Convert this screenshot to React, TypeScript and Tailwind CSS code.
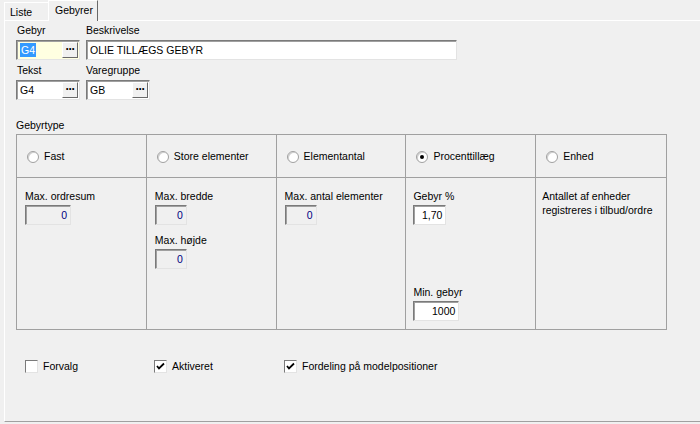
import React from 'react';

const font = { fontFamily: 'Tahoma, "Liberation Sans", "DejaVu Sans", sans-serif' };

const Edit = ({ value, w, muted, right, yellow, selected, lookup }: { value: string; w: string; muted?: boolean; right?: boolean; yellow?: boolean; selected?: boolean; lookup?: boolean }) => (
  <div
    className={`${w} h-[20px] flex items-center border border-t-[#7a7a7a] border-l-[#7a7a7a] border-b-[#e3e3e3] border-r-[#e3e3e3] shadow-[inset_1px_1px_0_#a0a0a0] ${muted ? 'bg-[#f0f0f0]' : yellow ? 'bg-[#ffffe1]' : 'bg-white'}`}
  >
    <div className={`flex-1 flex items-center px-[3px] ${right ? 'justify-end' : ''}`}>
      <span className={`${muted ? 'text-[#000080]' : 'text-black'} ${selected ? 'bg-[#3399ff] text-white px-[1px]' : ''} leading-[14px]`}>{value}</span>
    </div>
    {lookup && (
      <div className="w-[16px] h-[16px] mr-[1px] bg-[#f0f0f0] border border-t-white border-l-white border-b-[#696969] border-r-[#696969] flex items-center justify-center">
        <span className="text-[12px] font-bold leading-[8px] tracking-[-1px] -mt-[3px]">···</span>
      </div>
    )}
  </div>
);

const Radio = ({ checked, label }: { checked?: boolean; label: string }) => (
  <div className="flex items-center gap-[5px] pl-[10px] pt-[14px]">
    <div className="w-[12px] h-[12px] rounded-full border border-[#a0a0a0] bg-white flex items-center justify-center shadow-[inset_1px_1px_0_#d0d0d0]">
      {checked && <div className="w-[4px] h-[4px] rounded-full bg-black" />}
    </div>
    <span>{label}</span>
  </div>
);

const Check = ({ checked, label }: { checked?: boolean; label: string }) => (
  <div className="flex items-center gap-[5px]">
    <div className="w-[13px] h-[13px] border border-t-[#7a7a7a] border-l-[#7a7a7a] border-b-[#e3e3e3] border-r-[#e3e3e3] bg-white flex items-center justify-center">
      {checked && (
        <svg width="9" height="9" viewBox="0 0 9 9">
          <path d="M1 4 L3 6.5 L8 1.5" stroke="black" strokeWidth="1.8" fill="none" />
        </svg>
      )}
    </div>
    <span>{label}</span>
  </div>
);

export default function App() {
  return (
    <div className="w-[700px] h-[424px] bg-[#f0f0f0] text-[10.5px] text-black overflow-hidden" style={font}>
      <div className="h-[20px] flex items-end pl-[4px]">
        <div className="h-[18px] w-[44px] border-t border-l border-white pl-[5px] pt-[2px]">Liste</div>
        <div className="h-[21px] w-[50px] -mb-[1px] bg-[#f0f0f0] border-t border-l border-white border-r border-r-[#696969] pl-[6px] pt-[2px] z-10 relative">Gebyrer</div>
      </div>
      <div className="ml-[4px] h-[402px] border-t border-l border-white border-b border-b-[#a0a0a0] pl-[11px] pt-[3px]">
        <div className="flex gap-[6px]">
          <div className="flex flex-col">
            <span className="pl-[1px] h-[16px] leading-[12px]">Gebyr</span>
            <Edit value="G4" w="w-[64px]" yellow selected lookup />
          </div>
          <div className="flex flex-col">
            <span className="h-[16px] leading-[12px]">Beskrivelse</span>
            <Edit value="OLIE TILLÆGS GEBYR" w="w-[371px]" />
          </div>
        </div>
        <div className="flex gap-[6px] mt-[4px]">
          <div className="flex flex-col">
            <span className="pl-[1px] h-[16px] leading-[12px]">Tekst</span>
            <Edit value="G4" w="w-[64px]" lookup />
          </div>
          <div className="flex flex-col">
            <span className="h-[16px] leading-[12px]">Varegruppe</span>
            <Edit value="GB" w="w-[64px]" lookup />
          </div>
        </div>
        <div className="mt-[19px] h-[15px] leading-[12px]">Gebyrtype</div>
        <div className="w-[651px] border border-[#a0a0a0] grid grid-cols-5">
          {['Fast', 'Store elementer', 'Elementantal', 'Procenttillæg', 'Enhed'].map((l, i) => (
            <div key={l} className={`h-[43px] border-b border-[#a0a0a0] ${i < 4 ? 'border-r' : ''}`}>
              <Radio label={l} checked={i === 3} />
            </div>
          ))}
          <div className="h-[151px] border-r border-[#a0a0a0] pl-[8px] pt-[11px]">
            <div className="h-[16px]">Max. ordresum</div>
            <Edit value="0" w="w-[46px]" muted right />
          </div>
          <div className="h-[151px] border-r border-[#a0a0a0] pl-[8px] pt-[11px]">
            <div className="h-[16px]">Max. bredde</div>
            <Edit value="0" w="w-[32px]" muted right />
            <div className="h-[16px] mt-[8px]">Max. højde</div>
            <Edit value="0" w="w-[32px]" muted right />
          </div>
          <div className="h-[151px] border-r border-[#a0a0a0] pl-[8px] pt-[11px]">
            <div className="h-[16px]">Max. antal elementer</div>
            <Edit value="0" w="w-[32px]" muted right />
          </div>
          <div className="h-[151px] border-r border-[#a0a0a0] pl-[7px] pt-[11px] flex flex-col">
            <div className="h-[16px]">Gebyr %</div>
            <Edit value="1,70" w="w-[33px]" right />
            <div className="h-[16px] mt-[60px]">Min. gebyr</div>
            <Edit value="1000" w="w-[46px]" right />
          </div>
          <div className="h-[151px] pl-[6px] pt-[11px] leading-[14px]">
            <div>Antallet af enheder</div>
            <div>registreres i tilbud/ordre</div>
          </div>
        </div>
        <div className="flex mt-[29px] pl-[9px]">
          <div className="w-[129px]"><Check label="Forvalg" /></div>
          <div className="w-[130px]"><Check label="Aktiveret" checked /></div>
          <div><Check label="Fordeling på modelpositioner" checked /></div>
        </div>
      </div>
    </div>
  );
}
